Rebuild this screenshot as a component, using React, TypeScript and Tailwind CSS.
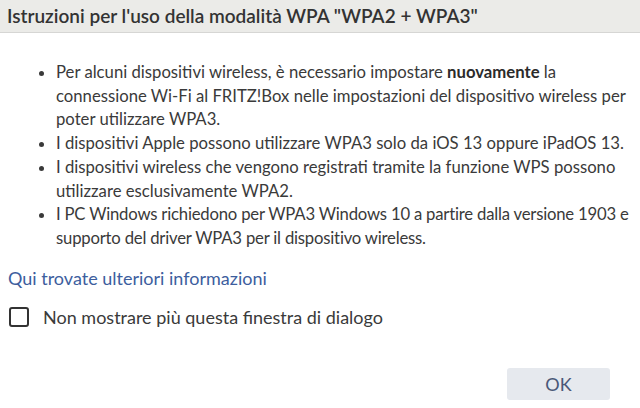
import { useState } from "react";

const FONT = "font-['Lato','Noto_Sans',sans-serif]";

const items: React.ReactNode[] = [
  <>
    Per alcuni dispositivi wireless, è necessario impostare <strong className="font-bold text-[#2b2b2b]">nuovamente</strong> la
    connessione Wi-Fi al FRITZ!Box nelle impostazioni del dispositivo wireless per poter utilizzare WPA3.
  </>,
  "I dispositivi Apple possono utilizzare WPA3 solo da iOS 13 oppure iPadOS 13.",
  "I dispositivi wireless che vengono registrati tramite la funzione WPS possono utilizzare esclusivamente WPA2.",
  // this line runs right to the edge in the original, so keep the break where it was
  <span className="tracking-[-0.2px]">
    I PC Windows richiedono per WPA3 Windows 10 a partire dalla versione 1903 e
    <br />
    supporto del driver WPA3 per il dispositivo wireless.
  </span>,
];

export default function App() {
  const [hide, setHide] = useState(false);
  return (
    <div className={`flex h-[408px] w-[640px] flex-col bg-white text-[#3a3a3a] ${FONT}`}>
      <header className="flex h-[33px] flex-none items-center border-b border-[#d6d6d4] bg-[#ebebe8] px-[7px]">
        <h1 className="text-[19px] font-semibold text-[#333]">Istruzioni per l'uso della modalità WPA "WPA2 + WPA3"</h1>
      </header>

      <ul className="mt-[28px] flex flex-col pl-[56px] pr-[2px] text-[16.7px] leading-[23.7px]">
        {items.map((it, i) => (
          <li key={i} className="relative">
            <span className="absolute left-[-17px] top-[10px] h-[5px] w-[5px] rounded-full bg-[#3a3a3a]" />
            {it}
          </li>
        ))}
      </ul>

      <a href="#" className="mt-[15px] px-[8px] text-[18px] leading-[24px] text-[#3d5e9e]">
        Qui trovate ulteriori informazioni
      </a>

      <label className="mt-[15px] flex items-center gap-[14px] px-[9px] text-[18px] leading-[24px]">
        <button
          onClick={() => setHide(!hide)}
          className="grid h-[20px] w-[20px] place-items-center rounded-[3px] border-2 border-[#333] bg-white text-[12px]"
        >
          {hide ? "✓" : null}
        </button>
        Non mostrare più questa finestra di dialogo
      </label>

      <div className="mt-auto flex justify-end pb-[8px] pr-[30px]">
        <button className="h-[32px] w-[103px] rounded-[3px] bg-[#e6e9ee] text-[18px] text-[#4a5878]">OK</button>
      </div>
    </div>
  );
}
